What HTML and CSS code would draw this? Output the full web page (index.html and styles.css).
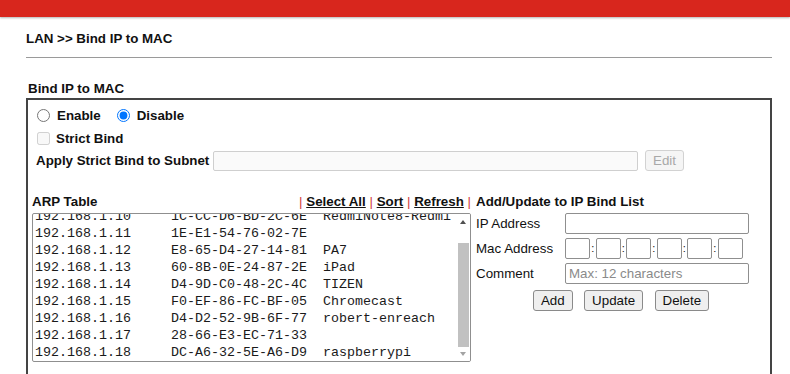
FILE: index.html
```html
<!DOCTYPE html>
<html>
<head>
<meta charset="utf-8">
<title>Bind IP to MAC</title>
<link rel="stylesheet" href="styles.css">
</head>
<body>
<div class="topbar"></div>
<div class="page">
  <h1 class="crumb">LAN &gt;&gt; Bind IP to MAC</h1>
  <h2 class="sec-title">Bind IP to MAC</h2>
  <div class="panel">
    <div class="row radios">
      <label class="opt"><input type="radio" name="bind">Enable</label>
      <label class="opt"><input type="radio" name="bind" checked>Disable</label>
    </div>
    <div class="row strict">
      <label class="opt"><input type="checkbox" disabled>Strict Bind</label>
    </div>
    <div class="row subnet">
      <span class="lbl">Apply Strict Bind to Subnet</span>
      <input class="subnet-in" type="text" disabled>
      <button class="btn btn-dis" disabled>Edit</button>
    </div>
    <div class="lists">
      <div class="arp">
        <div class="arp-head">
          <span>ARP Table</span>
          <span class="links"><span class="pipe">|</span> <a href="#">Select All</a> <span class="pipe">|</span> <a href="#">Sort</a> <span class="pipe">|</span> <a href="#">Refresh</a> <span class="pipe">|</span></span>
        </div>
        <div class="listbox">
          <div class="lb-content">
            <div class="lb-rows">
              <div class="lb-row">192.168.1.10     1C-CC-D6-BD-2C-6E  RedmiNote8-Redmi</div>
              <div class="lb-row">192.168.1.11     1E-E1-54-76-02-7E</div>
              <div class="lb-row">192.168.1.12     E8-65-D4-27-14-81  PA7</div>
              <div class="lb-row">192.168.1.13     60-8B-0E-24-87-2E  iPad</div>
              <div class="lb-row">192.168.1.14     D4-9D-C0-48-2C-4C  TIZEN</div>
              <div class="lb-row">192.168.1.15     F0-EF-86-FC-BF-05  Chromecast</div>
              <div class="lb-row">192.168.1.16     D4-D2-52-9B-6F-77  robert-enreach</div>
              <div class="lb-row">192.168.1.17     28-66-E3-EC-71-33</div>
              <div class="lb-row">192.168.1.18     DC-A6-32-5E-A6-D9  raspberrypi</div>
            </div>
          </div>
          <div class="sb">
            <div class="sb-btn sb-up"><span class="arrow-up"></span></div>
            <div class="sb-track"><div class="sb-thumb"></div></div>
            <div class="sb-btn sb-down"><span class="arrow-down"></span></div>
          </div>
        </div>
      </div>
      <div class="bindform">
        <div class="form-head">Add/Update to IP Bind List</div>
        <div class="form-grid">
          <span class="flbl">IP Address</span>
          <input class="fin" type="text">
          <span class="flbl">Mac Address</span>
          <div class="mac">
            <input class="mac-in" type="text"><span class="sep">:</span>
            <input class="mac-in" type="text"><span class="sep">:</span>
            <input class="mac-in" type="text"><span class="sep">:</span>
            <input class="mac-in" type="text"><span class="sep">:</span>
            <input class="mac-in" type="text"><span class="sep">:</span>
            <input class="mac-in" type="text">
          </div>
          <span class="flbl">Comment</span>
          <input class="fin" type="text" placeholder="Max: 12 characters">
        </div>
        <div class="actions">
          <button class="btn">Add</button>
          <button class="btn">Update</button>
          <button class="btn">Delete</button>
        </div>
      </div>
    </div>
  </div>
</div>
</body>
</html>
```
FILE: styles.css
```css
* { box-sizing: border-box; }

body {
  margin: 0;
  font-family: "Liberation Sans", Arial, sans-serif;
  font-size: 13.33px;
  color: #111;
  background: #fff;
  overflow: hidden;
}

.topbar {
  height: 17px;
  background: #d8261d;
  box-shadow: 0 1px 2px rgba(0, 0, 0, 0.3);
}

.page {
  padding: 0 18px 0 26px;
}

.crumb {
  margin: 0;
  padding: 14px 0 11px 0;
  font-size: 13.33px;
  line-height: 15px;
  font-weight: bold;
  border-bottom: 1px solid #9a9a9a;
}

.sec-title {
  margin: 23px 0 2px;
  padding-left: 2px;
  font-size: 13.33px;
  line-height: 15px;
  font-weight: bold;
}

.panel {
  height: 290px;
  border: 2px solid #444;
  border-bottom: none;
  padding: 5px 4px 0;
}

.row {
  display: flex;
  align-items: center;
}

.radios { height: 20px; }

.opt {
  display: flex;
  align-items: center;
  font-weight: bold;
}

.opt input {
  width: 13px;
  height: 13px;
  margin: 0 7px 0 5px;
}

.opt + .opt { margin-left: 11px; }

.strict {
  height: 20px;
  margin-top: 3px;
}

.strict .opt input { margin: 0 6px 0 5px; }

.subnet {
  height: 21px;
  margin-top: 2px;
}

.subnet .lbl {
  width: 181px;
  padding-left: 4px;
  font-weight: bold;
  white-space: nowrap;
}

.subnet-in {
  width: 425px;
  height: 20px;
  margin: 0 7px 0 0;
  border: 1px solid #cfcfcf;
  border-radius: 2px;
  background: #fafafa;
}

.btn {
  height: 21px;
  padding: 0 7px;
  font-family: "Liberation Sans", Arial, sans-serif;
  font-size: 13.33px;
  color: #111;
  background: #efefef;
  border: 1px solid #8a8a8a;
  border-radius: 3px;
}

.btn-dis {
  color: #a8a8a8;
  background: #f5f5f5;
  border-color: #d2d2d2;
}

.lists {
  display: grid;
  grid-template-columns: 439px 1fr;
  column-gap: 5px;
  margin-top: 22px;
}

.arp-head {
  display: flex;
  justify-content: space-between;
  height: 17px;
  line-height: 17px;
  font-weight: bold;
}

.links a {
  color: #111;
  text-decoration: underline;
}

.pipe {
  color: #d23a3a;
  font-weight: normal;
}

.listbox {
  display: flex;
  height: 149px;
  margin-top: 3px;
  border: 1px solid #8f8f8f;
  border-radius: 2px;
  overflow: hidden;
}

.lb-content {
  flex: 1;
  overflow: hidden;
  padding-left: 2px;
}

.lb-rows {
  margin-top: -6px;
  font-family: "Liberation Mono", "Courier New", monospace;
  font-size: 13.33px;
  line-height: 17px;
  color: #1a1a1a;
}

.lb-row {
  height: 17px;
  white-space: pre;
}

.sb {
  display: flex;
  flex-direction: column;
  width: 14px;
  background: #fff;
}

.sb-btn {
  display: flex;
  align-items: center;
  justify-content: center;
}

.sb-up { height: 15px; }
.sb-down { height: 14px; }

.arrow-up {
  width: 0;
  height: 0;
  border-left: 3.5px solid transparent;
  border-right: 3.5px solid transparent;
  border-bottom: 4px solid #505050;
}

.arrow-down {
  width: 0;
  height: 0;
  border-left: 3.5px solid transparent;
  border-right: 3.5px solid transparent;
  border-top: 4px solid #a3a3a3;
}

.sb-track {
  flex: 1;
  display: flex;
  flex-direction: column;
  justify-content: flex-end;
}

.sb-thumb {
  height: 104px;
  margin: 0 1px 0 2px;
  background: #c1c1c1;
}

.form-head {
  height: 17px;
  line-height: 17px;
  font-weight: bold;
}

.form-grid {
  display: grid;
  grid-template-columns: 89px 184px;
  grid-auto-rows: 21px;
  row-gap: 4px;
  align-items: center;
  margin-top: 3px;
}

.fin {
  width: 184px;
  height: 21px;
  padding: 1px 3px;
  font-family: "Liberation Sans", Arial, sans-serif;
  font-size: 13.33px;
  border: 1px solid #8f8f8f;
  border-radius: 2px;
}

.fin::placeholder { color: #8a8a8a; }

.mac {
  display: flex;
  align-items: center;
}

.mac-in {
  width: 25px;
  height: 21px;
  border: 1px solid #8f8f8f;
  border-radius: 2px;
}

.sep {
  width: 5.5px;
  text-align: center;
  font-size: 11px;
  line-height: 21px;
}

.actions {
  display: flex;
  justify-content: center;
  gap: 11.5px;
  margin-top: 6px;
}
```
